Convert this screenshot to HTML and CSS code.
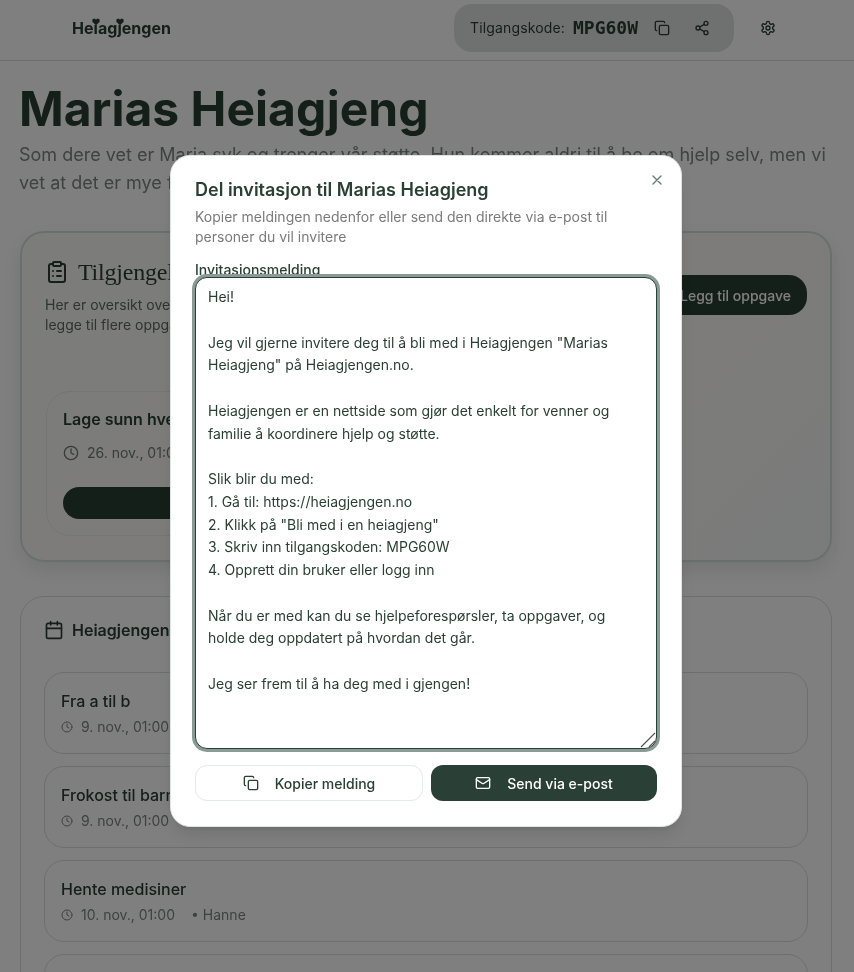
FILE: index.html
```html
<!DOCTYPE html>
<html lang="no">
	<head>
		<meta charset="UTF-8">
		<meta name="viewport" content="width=device-width, initial-scale=1.0">
		<title>Marias Heiagjeng</title>
		<link rel="stylesheet" href="styles.css">
	</head>

	<body>
		<svg class="icon-defs" aria-hidden="true">
			<symbol id="i-copy" viewBox="0 0 24 24"><rect x="8" y="8" width="14" height="14" rx="2"/><path d="M4 16c-1.1 0-2-.9-2-2V4c0-1.1.9-2 2-2h10c1.1 0 2 .9 2 2"/></symbol>
			<symbol id="i-share" viewBox="0 0 24 24"><circle cx="18" cy="5" r="3"/><circle cx="6" cy="12" r="3"/><circle cx="18" cy="19" r="3"/><path d="M8.59 13.51l6.83 3.98M15.41 6.51l-6.82 3.98"/></symbol>
			<symbol id="i-settings" viewBox="0 0 24 24"><path d="M12.22 2h-.44a2 2 0 0 0-2 2v.18a2 2 0 0 1-1 1.73l-.43.25a2 2 0 0 1-2 0l-.15-.08a2 2 0 0 0-2.73.73l-.22.38a2 2 0 0 0 .73 2.73l.15.1a2 2 0 0 1 1 1.72v.51a2 2 0 0 1-1 1.74l-.15.09a2 2 0 0 0-.73 2.73l.22.38a2 2 0 0 0 2.73.73l.15-.08a2 2 0 0 1 2 0l.43.25a2 2 0 0 1 1 1.73V20a2 2 0 0 0 2 2h.44a2 2 0 0 0 2-2v-.18a2 2 0 0 1 1-1.73l.43-.25a2 2 0 0 1 2 0l.15.08a2 2 0 0 0 2.73-.73l.22-.39a2 2 0 0 0-.73-2.73l-.15-.08a2 2 0 0 1-1-1.74v-.5a2 2 0 0 1 1-1.74l.15-.09a2 2 0 0 0 .73-2.73l-.22-.38a2 2 0 0 0-2.73-.73l-.15.08a2 2 0 0 1-2 0l-.43-.25a2 2 0 0 1-1-1.73V4a2 2 0 0 0-2-2z"/><circle cx="12" cy="12" r="3"/></symbol>
			<symbol id="i-clock" viewBox="0 0 24 24"><circle cx="12" cy="12" r="10"/><path d="M12 6v6l4 2"/></symbol>
			<symbol id="i-calendar" viewBox="0 0 24 24"><path d="M8 2v4M16 2v4"/><rect x="3" y="4" width="18" height="18" rx="2"/><path d="M3 10h18"/></symbol>
			<symbol id="i-clipboard" viewBox="0 0 24 24"><rect x="8" y="2" width="8" height="4" rx="1"/><path d="M16 4h2a2 2 0 0 1 2 2v14a2 2 0 0 1-2 2H6a2 2 0 0 1-2-2V6a2 2 0 0 1 2-2h2"/><path d="M12 11h4M12 16h4M8 11h.01M8 16h.01"/></symbol>
			<symbol id="i-mail" viewBox="0 0 24 24"><rect x="2" y="4" width="20" height="16" rx="2"/><path d="m22 7-8.97 5.7a1.94 1.94 0 0 1-2.06 0L2 7"/></symbol>
			<symbol id="i-close" viewBox="0 0 24 24"><path d="M18 6 6 18M6 6l12 12"/></symbol>
			<symbol id="i-plus" viewBox="0 0 24 24"><path d="M5 12h14M12 5v14"/></symbol>
			<symbol id="i-heart" viewBox="0 0 24 24"><path class="heart" d="M12 22 2.6 12.2C-.6 8.8 1.4 2.500 6.600 2.500c2.400 0 4.200 1.300 5.400 3.200 1.200-1.900 3-3.200 5.400-3.200 5.200 0 7.200 6.300 4 9.700z"/></symbol>
		</svg>

		<div class="page">
			<header class="topbar">
				<div class="logo">
					<span>Heiagjengen</span>
					<svg class="logo-heart logo-heart-i"><use href="#i-heart"/></svg>
					<svg class="logo-heart logo-heart-j"><use href="#i-heart"/></svg>
				</div>
				<div class="topbar-right">
					<div class="code-pill">
						<span class="code-label">Tilgangskode:</span>
						<span class="code-value">MPG60W</span>
						<button class="icon-btn"><svg class="icon"><use href="#i-copy"/></svg></button>
						<button class="icon-btn"><svg class="icon"><use href="#i-share"/></svg></button>
					</div>
					<button class="icon-btn settings-btn"><svg class="icon"><use href="#i-settings"/></svg></button>
				</div>
			</header>

			<main class="content">
				<h1>Marias Heiagjeng</h1>
				<p class="lead">Som dere vet er Maria syk og trenger vår støtte. Hun kommer aldri til å be om hjelp selv, men vi vet at det er mye folk som vil hjelpe.</p>

				<section class="card card-open">
					<div class="card-open-head">
						<div>
							<h2 class="serif-title"><svg class="icon icon-24"><use href="#i-clipboard"/></svg>Tilgjengelige oppgaver</h2>
							<p class="card-text">Her er oversikt over oppgaver som trenger hjelp.<br>legge til flere oppgaver.</p>
						</div>
						<button class="btn-add"><svg class="icon"><use href="#i-plus"/></svg>Legg til oppgave</button>
					</div>
					<div class="open-task">
						<h3>Lage sunn hverdagsmat</h3>
						<div class="open-task-time"><svg class="icon"><use href="#i-clock"/></svg>26. nov., 01:00</div>
						<div class="open-task-btn"></div>
					</div>
				</section>

				<section class="card card-team">
					<h2 class="team-title"><svg class="icon icon-20"><use href="#i-calendar"/></svg>Heiagjengen sine oppgaver</h2>
					<div class="task-list">
						<div class="task">
							<div class="task-name">Fra a til b</div>
							<div class="task-meta"><svg class="icon icon-12"><use href="#i-clock"/></svg><span>9. nov., 01:00</span></div>
						</div>
						<div class="task">
							<div class="task-name">Frokost til barna</div>
							<div class="task-meta"><svg class="icon icon-12"><use href="#i-clock"/></svg><span>9. nov., 01:00</span></div>
						</div>
						<div class="task">
							<div class="task-name">Hente medisiner</div>
							<div class="task-meta"><svg class="icon icon-12"><use href="#i-clock"/></svg><span>10. nov., 01:00</span><span class="task-who">• Hanne</span></div>
						</div>
						<div class="task"></div>
					</div>
				</section>
			</main>
		</div>

		<div class="overlay"></div>

		<div class="dialog">
			<button class="dialog-close"><svg class="icon"><use href="#i-close"/></svg></button>
			<h2 class="dialog-title">Del invitasjon til Marias Heiagjeng</h2>
			<p class="dialog-desc">Kopier meldingen nedenfor eller send den direkte via e-post til personer du vil invitere</p>
			<label class="dialog-label" for="message">Invitasjonsmelding</label>
			<div class="message-wrap">
				<textarea id="message" class="dialog-message">Hei!

Jeg vil gjerne invitere deg til å bli med i Heiagjengen "Marias Heiagjeng" på Heiagjengen.no.

Heiagjengen er en nettside som gjør det enkelt for venner og familie å koordinere hjelp og støtte.

Slik blir du med:
1. Gå til: https://heiagjengen.no
2. Klikk på "Bli med i en heiagjeng"
3. Skriv inn tilgangskoden: MPG60W
4. Opprett din bruker eller logg inn

Når du er med kan du se hjelpeforespørsler, ta oppgaver, og holde deg oppdatert på hvordan det går.

Jeg ser frem til å ha deg med i gjengen!</textarea>
				<svg class="message-grip" viewBox="0 0 16 16"><path d="M1 15 15 1M9 15l6-6"/></svg>
			</div>
			<div class="dialog-actions">
				<button class="btn btn-outline"><svg class="icon"><use href="#i-copy"/></svg>Kopier melding</button>
				<button class="btn btn-dark"><svg class="icon"><use href="#i-mail"/></svg>Send via e-post</button>
			</div>
		</div>
	</body>
</html>
```

FILE: styles.css
```css
* {
	box-sizing: border-box;
}

body {
	margin: 0;
	font-family: Inter, "Noto Sans", sans-serif;
	color: #2a3f35;
	background-color: #ffffff;
}

button {
	font-family: inherit;
	color: inherit;
	background: none;
	border: none;
	padding: 0;
}

.icon-defs {
	display: none;
}

.icon {
	width: 16px;
	height: 16px;
	flex: none;
	fill: none;
	stroke: currentColor;
	stroke-width: 2;
	stroke-linecap: round;
	stroke-linejoin: round;
}

.icon-24 {
	width: 24px;
	height: 24px;
}

.icon-20 {
	width: 20px;
	height: 20px;
}

.icon-12 {
	width: 12px;
	height: 12px;
}

.page {
	height: 100vh;
	overflow: hidden;
	will-change: opacity;
}

/* top bar */
.topbar {
	height: 61px;
	display: flex;
	align-items: center;
	justify-content: space-between;
	padding: 0 66px 5px 72px;
	border-bottom: 1px solid #d6e0dc;
}

.logo {
	position: relative;
	font-size: 16px;
	font-weight: 700;
	line-height: 24px;
	letter-spacing: 0.02px;
}

.logo-heart {
	position: absolute;
	top: 2px;
	width: 8px;
	height: 8px;
}

.logo-heart-i {
	left: 20px;
}

.logo-heart-j {
	left: 44px;
}

.heart {
	fill: #2a3f35;
	stroke: #2a3f35;
}

.topbar-right {
	display: flex;
	align-items: center;
	gap: 14px;
}

.code-pill {
	display: flex;
	align-items: center;
	gap: 8px;
	height: 48px;
	padding: 0 16px;
	background-color: #dfe0e0;
	border-radius: 18px;
}

.code-label {
	font-size: 14px;
	letter-spacing: 0.15px;
}

.code-value {
	font-family: "DejaVu Sans Mono", monospace;
	font-size: 18px;
	font-weight: 700;
}

.icon-btn {
	width: 32px;
	height: 32px;
	display: flex;
	align-items: center;
	justify-content: center;
}

.settings-btn {
	width: 40px;
	height: 40px;
}

/* page content */
.content {
	padding: 24px 22px 0 20px;
}

h1 {
	margin: 0 0 0 -1px;
	font-size: 48px;
	line-height: 48px;
	font-weight: 700;
}

.lead {
	margin: 8px 0 34px -1px;
	font-size: 18px;
	line-height: 28px;
	color: #7c8482;
}

.card {
	border-radius: 24px;
	background-color: #ffffff;
}

.card-open {
	height: 331px;
	padding: 24px;
	border: 2px solid #d3dfdb;
	background: linear-gradient(135deg, #f8f8f6, #fbf8f5 55%, #f4f7f6);
	box-shadow: 0 8px 20px rgba(42, 63, 53, 0.12);
}

.card-open-head {
	display: flex;
	align-items: center;
	justify-content: space-between;
	margin-right: -1px;
}

.serif-title {
	display: flex;
	align-items: center;
	gap: 9px;
	margin: 0 0 8px -1px;
	height: 30px;
	font-family: "Liberation Serif", serif;
	font-size: 24px;
	font-weight: 400;
	letter-spacing: -0.2px;
}

.card-text {
	margin: 0 0 0 -1px;
	font-size: 14px;
	line-height: 20px;
	color: #5b6a64;
}

.btn-add {
	display: flex;
	align-items: center;
	gap: 8px;
	height: 40px;
	margin-bottom: 2px;
	padding: 0 16px;
	font-size: 14px;
	font-weight: 500;
	color: #ffffff;
	background-color: #2a3f35;
	border-radius: 18px;
}

.open-task {
	width: 380px;
	height: 145px;
	margin-top: 56px;
	padding: 15px 16px;
	border: 1px solid #e8ecea;
	border-radius: 24px;
}

.open-task h3 {
	margin: 0;
	font-size: 16px;
	line-height: 24px;
	font-weight: 600;
}

.open-task-time {
	display: flex;
	align-items: center;
	gap: 8px;
	margin-top: 12px;
	font-size: 14px;
	line-height: 20px;
	color: #6f7a75;
}

.open-task-btn {
	height: 32px;
	margin-top: 24px;
	background-color: #2a3f35;
	border-radius: 16px;
}

.card-team {
	margin-top: 34px;
	padding: 21px 23px 24px;
	border: 1px solid #d6e0dc;
}

.team-title {
	display: flex;
	align-items: center;
	gap: 8px;
	margin: 0 0 30px;
	font-size: 16px;
	line-height: 24px;
	font-weight: 600;
}

.task-list {
	display: flex;
	flex-direction: column;
	gap: 12px;
}

.task {
	height: 82px;
	padding: 16px;
	border: 1px solid #d6e0dc;
	border-radius: 20px;
}

.task-name {
	font-size: 16px;
	line-height: 24px;
	font-weight: 500;
}

.task-meta {
	display: flex;
	align-items: center;
	gap: 8px;
	margin-top: 4px;
	font-size: 14px;
	line-height: 20px;
	color: #7b8581;
}

.task-who {
	margin-left: 8px;
}

/* dialog */
.overlay {
	position: fixed;
	inset: 0;
	background-color: rgba(0, 0, 0, 0.5);
}

.dialog {
	position: fixed;
	left: 170px;
	top: 155px;
	width: 512px;
	padding: 24px;
	background-color: #ffffff;
	border: 1px solid #dde5e2;
	border-radius: 20px;
	box-shadow: 0 10px 15px -3px rgba(0, 0, 0, 0.1), 0 4px 6px -4px rgba(0, 0, 0, 0.1);
	will-change: transform;
}

.dialog-close {
	position: absolute;
	top: 16px;
	right: 16px;
	width: 16px;
	height: 16px;
	opacity: 0.7;
}

.dialog-title {
	margin: 0;
	font-size: 18px;
	line-height: 20px;
	font-weight: 600;
}

.dialog-desc {
	margin: 7px 0 13px;
	font-size: 14px;
	line-height: 20px;
	color: #7b7b7b;
}

.dialog-label {
	display: block;
	font-size: 14px;
	line-height: 20px;
	font-weight: 500;
	margin-bottom: -3px;
}

.message-wrap {
	position: relative;
}

.dialog-message {
	display: block;
	width: 462px;
	height: 472px;
	padding: 8px 12px;
	font-family: inherit;
	font-size: 14px;
	line-height: 22.75px;
	color: #2a3f35;
	border: 1px solid #2a3f35;
	border-radius: 12px;
	outline: none;
	resize: none;
	box-shadow: 0 0 0 3px #8a9a94;
}

.message-grip {
	position: absolute;
	right: 1px;
	bottom: 1px;
	width: 16px;
	height: 16px;
	fill: none;
	stroke: #555;
	stroke-width: 1.2;
}

.dialog-actions {
	display: grid;
	grid-template-columns: 228px 226px;
	gap: 8px;
	margin-top: 16px;
	margin-bottom: 1px;
}

.btn {
	display: flex;
	align-items: center;
	justify-content: center;
	gap: 16px;
	height: 36px;
	font-size: 14px;
	font-weight: 500;
	border-radius: 12px;
}

.btn-outline {
	background-color: #ffffff;
	border: 1px solid #e4eae7;
}

.btn-dark {
	color: #ffffff;
	background-color: #2a3f35;
}
```
